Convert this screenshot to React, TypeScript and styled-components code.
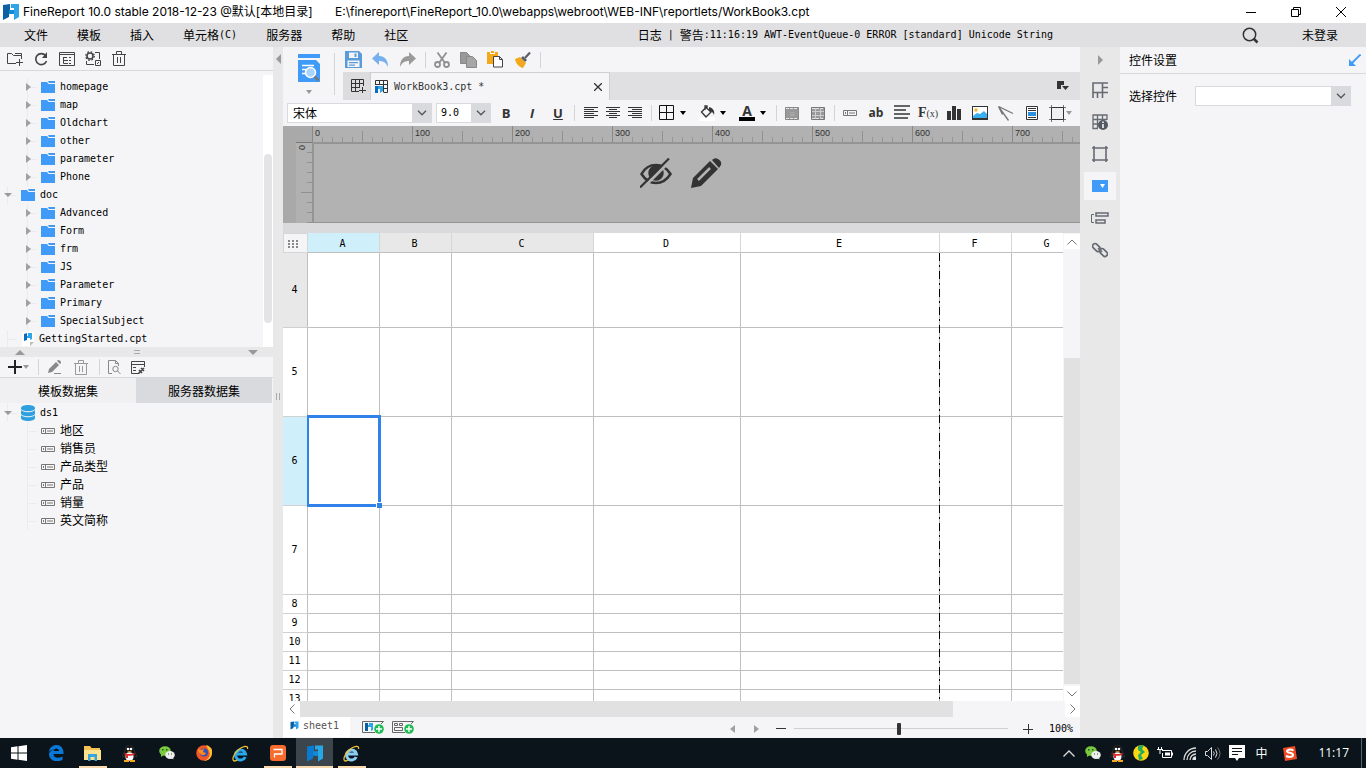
import React from "react";
import styled, { createGlobalStyle, css } from "styled-components";

const MONO = '"DejaVu Sans Mono", "Noto Sans CJK SC", monospace';
const TITLE = 'Inter, "Noto Sans CJK SC", sans-serif';
const CJK = '"Noto Sans CJK SC", sans-serif';

const Global = createGlobalStyle`
  *, *::before, *::after { box-sizing: border-box; }
  body { margin: 0; background: #f5f5f7; color: #000; font-family: ${CJK}; font-size: 12px; line-height: 18px; }
  button, input, select { font: inherit; color: inherit; margin: 0; }
  svg { display: block; flex: none; }
  h2, ul, p { margin: 0; padding: 0; font-weight: 400; font-size: 12px; list-style: none; }
`;

/* ---------- shell ---------- */
const Shell = styled.div`
  display: flex;
  flex-direction: column;
  height: 100vh;
  min-height: 600px;
  overflow: hidden;
`;
const TitleBar = styled.header`
  display: flex;
  align-items: center;
  gap: 3px;
  flex: none;
  height: 23px;
  padding-left: 2px;
  background: #fff;
  font-family: ${TITLE};
  font-size: 12px;
`;
const TitleText = styled.span<{ $min?: number }>`
  min-width: ${(p) => p.$min ?? 0}px;
  white-space: nowrap;
`;
const WindowButtons = styled.div`
  display: flex;
  margin-left: auto;
  padding-right: 2px;
`;
const PlainButton = styled.button<{ $w?: number; $h?: number }>`
  display: flex;
  align-items: center;
  justify-content: center;
  flex: none;
  width: ${(p) => (p.$w ? `${p.$w}px` : "auto")};
  height: ${(p) => (p.$h ? `${p.$h}px` : "auto")};
  padding: 0;
  border: 0;
  background: none;
  white-space: nowrap;
`;
const MenuBar = styled.nav`
  display: flex;
  align-items: center;
  flex: none;
  height: 24px;
  padding: 0 28px 0 24px;
  background: #e0e0e2;
`;
const MenuList = styled.div`
  display: flex;
  gap: 29px;
`;
const LoginButton = styled(PlainButton)`
  margin-left: 43px;
`;
const Mono = styled.span`
  font-family: ${MONO};
  font-size: 10px;
`;
const LogText = styled.p`
  display: flex;
  align-items: center;
  margin: 0 189px 0 auto;
  white-space: pre;
`;
const Workspace = styled.main`
  display: flex;
  flex: 1;
  min-height: 0;
`;

/* ---------- left side ---------- */
const Sidebar = styled.aside`
  display: flex;
  flex-direction: column;
  flex: 0 0 273px;
  background: #f5f5f7;
`;
const SideToolbar = styled.div<{ $h: number; $gap: number }>`
  display: flex;
  align-items: center;
  gap: ${(p) => p.$gap}px;
  flex: none;
  height: ${(p) => p.$h}px;
  padding: 0 7px;
  border-bottom: 1px solid #d8d8da;
`;
const TreePane = styled.div`
  display: flex;
  flex: 0 0 276px;
  padding-top: 4px;
  overflow: hidden;
`;
const TreeList = styled.ul<{ $top: number }>`
  flex: 1;
  padding-top: ${(p) => p.$top}px;
`;
const TreeRow = styled.li<{ $level: number; $cjk?: boolean }>`
  display: flex;
  align-items: center;
  height: 18px;
  padding-left: ${(p) => 3 + p.$level * 20}px;
  font-family: ${MONO};
  font-size: ${(p) => (p.$cjk ? 12 : 10)}px;
  background: linear-gradient(#ebebed, #ebebed) no-repeat ${(p) => 7 + p.$level * 20}px 9px / 10px 1px,
    linear-gradient(#ebebed, #ebebed) no-repeat ${(p) => 7 + p.$level * 20}px 0 / 1px 100%;
`;
const Twisty = styled.span`
  display: flex;
  justify-content: center;
  width: 10px;
  margin-right: 8px;
`;
const TreeLabel = styled.span`
  margin-left: 5px;
`;
const TreeScroll = styled.div`
  flex: 0 0 10px;
  padding: 79px 1px 0;
  background: #fff;
`;
const TreeThumb = styled.div`
  height: 169px;
  border-radius: 4px;
  background: #e4e4e6;
`;
const HSplit = styled.div`
  display: flex;
  align-items: center;
  justify-content: space-between;
  flex: none;
  height: 10px;
  padding: 0 15px;
  background: #e8e8e8;
`;
const Divider = styled.span<{ $h?: number; $before?: number; $after?: number }>`
  flex: none;
  width: 1px;
  height: ${(p) => p.$h ?? 16}px;
  margin: 0 ${(p) => p.$after ?? 0}px 0 ${(p) => p.$before ?? 0}px;
  background: #d4d4d6;
`;
const TabRow = styled.div`
  display: flex;
  flex: none;
  height: 25px;
  padding-right: 1px;
`;
const SideTab = styled.button<{ $active?: boolean }>`
  flex: 1;
  padding: 0;
  border: 0;
  background: ${(p) => (p.$active ? "#f0f0f2" : "#d8dadd")};
`;
const VSplit = styled.div`
  display: flex;
  flex-direction: column;
  align-items: center;
  flex: 0 0 10px;
  padding: 7px 0 10px;
  background: #e8e8e8;
`;
const Grip = styled.span`
  width: 4px;
  height: 7px;
  margin: auto 1px auto 0;
  border: solid #aaa;
  border-width: 0 1px;
`;

/* ---------- editor ---------- */
const Editor = styled.section`
  display: flex;
  flex-direction: column;
  flex: 1;
  min-width: 0;
  background: #f5f5f7;
`;
const EditorHead = styled.div`
  display: flex;
  align-items: center;
  flex: none;
  height: 53px;
`;
const PreviewButton = styled.button`
  display: flex;
  flex-direction: column;
  align-items: center;
  gap: 7px;
  width: 51px;
  padding: 0;
  border: 0;
  background: none;
`;
const HeadColumn = styled.div`
  display: flex;
  flex-direction: column;
  flex: 1;
  min-width: 0;
`;
const HeadToolbar = styled.div`
  display: flex;
  align-items: center;
  height: 25px;
  padding-left: 2px;
`;
const ToolGroup = styled.div`
  display: flex;
  gap: 10px;
`;
const FileTabs = styled.div`
  display: flex;
  height: 28px;
  background: #e0e0e2;
`;
const NewTab = styled(PlainButton)`
  padding-left: 4px;
  background: #dcdcdf;
`;
const FileTab = styled.div`
  display: flex;
  align-items: center;
  width: 240px;
  padding: 0 1px 0 4px;
  border: 1px solid #cfcfd1;
  border-bottom: 0;
  background: #f5f5f7;
  color: #333;
`;
const FileName = styled(Mono)`
  margin: 0 auto 0 5px;
`;
const TabMenu = styled(PlainButton)`
  margin: 0 11px 0 auto;
`;
const FormatBar = styled.div`
  display: flex;
  align-items: center;
  flex: none;
  height: 26px;
  padding-left: 4px;
`;
const Picker = styled.span<{ $w?: number; $gap?: number }>`
  display: grid;
  align-items: center;
  flex: ${(p) => (p.$w ? `0 0 ${p.$w}px` : "1")};
  height: 20px;
  margin-right: ${(p) => p.$gap ?? 0}px;
  & > * { grid-area: 1 / 1; }
`;
const PickerSelect = styled.select<{ $mono?: boolean }>`
  width: 100%;
  height: 20px;
  padding: 0 22px 0 5px;
  border: 1px solid #d8dadd;
  border-radius: 0;
  background: #fff;
  appearance: none;
  ${(p) => p.$mono && css`padding-left: 4px; font-family: ${MONO}; font-size: 10px;`}
`;
const PickerArrow = styled.span`
  display: flex;
  align-items: center;
  justify-content: center;
  justify-self: end;
  width: 20px;
  height: 20px;
  background: #d8dadd;
  pointer-events: none;
`;
const LetterButton = styled(PlainButton)<{ $kind: "b" | "i" | "u" }>`
  color: #333;
  font-family: "Open Sans", sans-serif;
  font-size: 13px;
  font-weight: 700;
  font-style: ${(p) => (p.$kind === "i" ? "italic" : "normal")};
  text-decoration: ${(p) => (p.$kind === "u" ? "underline" : "none")};
`;
const MenuToolButton = styled(PlainButton)<{ $tight?: boolean }>`
  justify-content: flex-start;
  gap: ${(p) => (p.$tight ? 0 : 5)}px;
  padding-left: 4px;
`;
const ColorLetter = styled.span`
  width: 16px;
  height: 16px;
  border-bottom: 4px solid #000;
  color: #333;
  font: 700 14px/12px "Open Sans", sans-serif;
  text-align: center;
`;
const AbText = styled.span`
  color: #333;
  font: 700 12px/16px "Open Sans", sans-serif;
`;
const FxText = styled.span`
  color: #333;
  font: 700 14px/16px "Liberation Serif", serif;
  small { font-size: 10px; font-weight: 400; }
`;

/* ---------- rulers ---------- */
const RulerArea = styled.div`
  display: flex;
  flex-direction: column;
  flex: none;
  height: 97px;
  overflow: hidden;
  background: #a9a9a9;
`;
const HRuler = styled.div`
  display: flex;
  flex: none;
  height: 16px;
  margin-left: 29px;
  overflow: hidden;
  background: linear-gradient(to right, #888 0 1px, transparent 1px) 0 0 / 100px 16px,
    linear-gradient(to right, #919191 0 1px, transparent 1px) repeat-x 50px 5px / 100px 11px,
    linear-gradient(to right, #969696 0 1px, transparent 1px) repeat-x 0 11px / 10px 5px,
    #b1b1b1;
`;
const RulerMark = styled.span`
  flex: 0 0 100px;
  padding-left: 3px;
  color: #333;
  font: 9px/14px "Liberation Sans", sans-serif;
`;
const CanvasRow = styled.div`
  display: flex;
  flex: 1;
  padding-left: 13px;
`;
const VRuler = styled.span`
  width: 16px;
  padding-top: 2px;
  border-top: 1px solid #777;
  color: #333;
  font: 9px/10px "Liberation Sans", sans-serif;
  writing-mode: vertical-rl;
  background: linear-gradient(#919191, #919191) no-repeat 5px 49px / 11px 1px,
    repeating-linear-gradient(to bottom, transparent 0 9px, #919191 9px 10px) no-repeat right 0 / 5px 100%,
    #b1b1b1;
  & > span { display: block; margin-right: 5px; }
`;
const ParamCanvas = styled.div`
  display: flex;
  align-items: center;
  justify-content: center;
  gap: 19px;
  flex: 1;
  padding: 0 32px 20px 0;
  border: solid #949494;
  border-width: 2px 0 1px 2px;
  background: #b2b2b2;
`;
const Gap = styled.div`
  flex: none;
  height: 10px;
  background: #dadadc;
`;

/* ---------- sheet ---------- */
const SheetRow = styled.div`
  display: flex;
  flex: 1;
  min-height: 0;
`;
const SheetView = styled.div`
  position: relative;
  flex: 1;
  min-width: 0;
  overflow: hidden;
  background: #fff;
`;
const Sheet = styled.table`
  width: 801px;
  table-layout: fixed;
  border-collapse: separate;
  border-spacing: 0;
  font-family: ${MONO};
  font-size: 10px;
  line-height: 12px;
`;
type Tone = "on" | "dim" | undefined;
const toneColor = (t: Tone) => (t === "on" ? "#cfeffb" : t === "dim" ? "#e8e8e8" : "#fff");
const ColHead = styled.th<{ $tone?: Tone }>`
  height: 20px;
  padding: 3px 2px 0 0;
  border-right: 1px solid #d6d6d8;
  border-bottom: 1px solid #bfbfbf;
  background: ${(p) => toneColor(p.$tone)};
  font-weight: 400;
`;
const Corner = styled.th`
  padding: 2px 0 0 4px;
  border: 1px solid #d6d6d8;
  background: #f5f5f7;
`;
const RowHead = styled.th<{ $tone?: Tone; $h: number }>`
  height: ${(p) => p.$h}px;
  padding: 0 1px 0 0;
  border-right: 1px solid #bfbfbf;
  border-bottom: 1px solid #d0d0d0;
  background: ${(p) => toneColor(p.$tone)};
  font-weight: 400;
`;
const Cell = styled.td`
  position: relative;
  padding: 0;
  border-right: 1px solid #bfbfbf;
  border-bottom: 1px solid #bfbfbf;
`;
const Selection = styled.div`
  position: absolute;
  z-index: 1;
  inset: -2px -2px -2px -1px;
  border: 3px solid #3081ea;
  border-left-width: 2px;
  &::after {
    content: "";
    position: absolute;
    right: -4px;
    bottom: -4px;
    width: 6px;
    height: 6px;
    border: solid #fff;
    border-width: 1px 0 0 1px;
    background: #3081ea;
  }
`;
const PageBreak = styled.div`
  position: absolute;
  top: 20px;
  bottom: 0;
  left: 656px;
  width: 1px;
  background: repeating-linear-gradient(to bottom, #000 0 8px, #bbb 8px 12px, #000 12px 14px, #bbb 14px 18px);
`;
const VScroll = styled.div`
  display: flex;
  flex-direction: column;
  flex: 0 0 17px;
  padding: 1px 0 0 1px;
`;
const HScroll = styled.div`
  display: flex;
  flex: none;
  height: 16px;
`;
const ScrollButton = styled(PlainButton)`
  background: #fff;
`;
const Stretch = styled.div<{ $grow: number; $thumb?: boolean }>`
  flex: ${(p) => p.$grow};
  background: ${(p) => (p.$thumb ? "#e1e1e1" : "transparent")};
`;
const SheetBar = styled.footer`
  display: flex;
  align-items: center;
  flex: none;
  height: 21px;
`;
const SheetTab = styled.button`
  display: flex;
  align-items: center;
  gap: 4px;
  align-self: flex-start;
  width: 67px;
  height: 20px;
  padding: 0 0 3px 7px;
  border: 0;
  background: #fff;
  color: #555;
`;
const AddButtons = styled.div`
  display: flex;
  gap: 8px;
  margin-left: 12px;
`;
const ZoomControls = styled.div`
  display: flex;
  align-items: center;
  margin-left: auto;
  padding: 2px 7px 0 0;
`;
const ZoomRange = styled.input`
  appearance: none;
  width: 214px;
  height: 14px;
  margin: 0 14px 0 1px;
  background: none;
  &::-webkit-slider-runnable-track { height: 1px; background: #d0d0d2; }
  &::-webkit-slider-thumb {
    appearance: none;
    width: 4px;
    height: 12px;
    margin-top: -5px;
    border-radius: 1px;
    background: #333;
  }
`;
const ZoomValue = styled(Mono)`
  margin-left: 15px;
`;

/* ---------- right side ---------- */
const Strip = styled.nav`
  display: flex;
  flex-direction: column;
  align-items: center;
  gap: 4px;
  flex: 0 0 40px;
  background: #e8e8e8;
`;
const StripButton = styled(PlainButton)<{ $active?: boolean }>`
  width: 32px;
  height: 28px;
  background: ${(p) => (p.$active ? "#f5f5f7" : "none")};
`;
const Properties = styled.aside`
  flex: 0 0 246px;
  background: #f5f5f7;
`;
const PropHead = styled.div`
  display: flex;
  align-items: center;
  justify-content: space-between;
  height: 27px;
  padding: 0 5px 0 9px;
  border-bottom: 1px solid #d8d8da;
`;
const PropField = styled.label`
  display: flex;
  align-items: center;
  gap: 18px;
  padding: 12px 15px 0 9px;
`;

/* ---------- task bar ---------- */
const Taskbar = styled.footer`
  display: flex;
  flex: none;
  height: 30px;
  background: #0a141a;
  color: #fff;
`;
const TaskButton = styled.button<{ $open?: boolean; $active?: boolean }>`
  display: flex;
  align-items: center;
  justify-content: center;
  flex: 0 0 37px;
  padding: 0;
  border: 0;
  background: ${(p) => (p.$active ? "#3c454b" : "none")};
  ${(p) =>
    p.$open &&
    css`
      background: linear-gradient(#fbd9ae, #fbd9ae) no-repeat center bottom / 28px 2px;
    `}
  ${(p) => p.$active && css`border-bottom: 2px solid #fbd9ae; padding-top: 2px;`}
`;
const Tray = styled.div`
  display: flex;
  align-items: center;
  margin-left: auto;
`;
const Clock = styled.time`
  margin: 0 12px 0 13px;
  font-family: "Open Sans", sans-serif;
  font-size: 12px;
`;
const DesktopEdge = styled.span`
  width: 1px;
  height: 30px;
  margin-right: 4px;
  background: #59636a;
`;

/* ---------- icons ---------- */
type IconProps = { w: number; h: number; children: React.ReactNode; c?: string; sw?: number };
const Icon = ({ w, h, children, c = "#333", sw = 1 }: IconProps) => (
  <svg width={w} height={h} viewBox={`0 0 ${w} ${h}`} fill="none" stroke={c} strokeWidth={sw} aria-hidden="true">
    {children}
  </svg>
);
const Caret = ({ c = "#999", w = 8 }: { c?: string; w?: number }) => (
  <Icon w={w} h={4} c="none"><path fill={c} d={`M0 0h${w}L${w / 2} 4z`} /></Icon>
);
const Chevron = () => <Icon w={10} h={6} c="#555" sw={1.3}><path d="M1 .8l4 4 4-4" /></Icon>;
const ClosedArrow = () => <Icon w={5} h={8} c="none"><path fill="#a0a0a0" d="M0 0l5 4-5 4z" /></Icon>;
const Logo = ({ w = 18, h = 16, light = "#2da5e8", dark = "#0a5fa5" }) => (
  <svg width={w} height={h} viewBox="0 0 18 16" aria-hidden="true">
    <path fill={dark} d="M1 1L8 0v6h2v4H7v3l-6 3z" />
    <path fill={light} d="M9 0h8v13l-5 3v-6H9V6h3V4H9z" />
    <path fill="#158ad4" d="M7 6h5v4H7z" />
  </svg>
);
const Folder = () => (
  <Icon w={14} h={12} c="none">
    <path fill="#409bf8" d="M0 1h6l1.500 2H14v9H0z" />
    <path fill="#409bf8" d="M7 0h7v2H8z" />
  </Icon>
);
const ReportFile = () => (
  <Icon w={13} h={14} c="none">
    <path fill="#fff" d="M1 0h12v10l-4 4H1z" />
    <path fill="#bbb" d="M9 10h4l-4 4z" />
    <path fill="#0a6cc0" d="M3 2l3-1v3h1v2H6v2l-3 1z" />
    <path fill="#2da5e8" d="M7 1h4v6l-2 1V6H6V4h1z" />
  </Icon>
);
const Database = () => (
  <Icon w={14} h={16} c="none">
    <path fill="#2f9fe0" d="M0 3c0-4 14-4 14 0v10c0 4-14 4-14 0z" />
    <path stroke="#f5f5f7" d="M0 4.500c2 3 12 3 14 0M0 9.500c2 3 12 3 14 0" />
  </Icon>
);
const Field = () => (
  <Icon w={14} h={6} c="#777"><path d="M.5.5h13v5H.5zM2.500 2v2M4.500 1v4M6 3h6" /></Icon>
);
const Trash = ({ c = "#333" }) => (
  <Icon w={14} h={15} c={c}><path d="M0 3.500h14M4.500 3V.5h5V3M1.500 4v10.500h11V4M5.500 6v6M8.500 6v6" /></Icon>
);
const Lines = ({ rows, w = 14, sw = 1 }: { rows: [number, number][]; w?: number; sw?: number }) => (
  <Icon w={w} h={rows.length * (sw > 1 ? 4 : 2)} c="#333" sw={sw}>
    {rows.map(([a, b], i) => (
      <path key={i} d={`M${a} ${sw > 1 ? i * 4 + 1 : i * 2 + 0.5}H${b}`} />
    ))}
  </Icon>
);
const Penguin = () => (
  <Icon w={15} h={17} c="none">
    <path fill="#111" stroke="#555" strokeWidth=".4" d="M3 6c0-8 9-8 9 0 1 2 3 4 2.500 6l-2-1.500c0 6-10 6-10 0L.6 12C0 10 2 8 3 6z" />
    <ellipse cx="7.500" cy="11.500" rx="4" ry="4.200" fill="#fff" />
    <circle cx="6" cy="4" r="1.300" fill="#fff" /><circle cx="9" cy="4" r="1.300" fill="#fff" />
    <path fill="#f6a81c" d="M5 6.200h5L7.500 7.600zM2 15h5v2H2zM8 15h5v2H8z" />
    <path fill="#e22b2b" d="M2.500 7.500c3 2 7 2 10 0v2c-2 1.500-5 1.500-6.500 1.200V13H4v-3c-1 0-1.500-.5-1.500-1z" />
  </Icon>
);
const WeChat = () => (
  <Icon w={16} h={14} c="none">
    <ellipse cx="6" cy="5" rx="5.800" ry="4.800" fill="#7bc93f" />
    <path fill="#7bc93f" d="M2 8v3l3-2z" />
    <ellipse cx="11" cy="9" rx="4.800" ry="4" fill="#eee" />
    <path fill="#eee" d="M12 12l2.500 1.500L14 11z" />
    <path fill="#24551a" d="M3 3h1.500v1.500H3zM7 3h1.500v1.500H7zM9 7.500h1v1H9zM12 7.500h1v1h-1z" />
  </Icon>
);
const Explorer = ({ ring = "#f1c232", c = "#2aa6ea" }) => (
  <Icon w={17} h={17} c="none">
    <path stroke={c} strokeWidth="3" d="M13.200 12A5 5 0 1 1 13.500 9H4" />
    <path stroke={ring} strokeWidth="1.300" d="M15.500 4C16.500 0 11 .5 6 5 1 9.500-.5 16 2.500 16c1 0 2-.5 3-1.200" />
  </Icon>
);
const AddSheet = ({ children }: { children: React.ReactNode }) => (
  <Icon w={22} h={13} c="#666">
    <path d="M13 11.500H.5V.5h21L19 3" />
    {children}
    <circle cx="17" cy="8" r="4.800" fill="#1fbb55" stroke="none" />
    <path stroke="#fff" strokeWidth="1.400" d="M14 8h6M17 5v6" />
  </Icon>
);

/* ---------- data ---------- */
const MENU = ["文件", "模板", "插入", "单元格", "服务器", "帮助", "社区"];
const TREE: { name: string; level: number; kind: "closed" | "open" | "file" }[] = [
  ...["homepage", "map", "Oldchart", "other", "parameter", "Phone"].map((name) => ({ name, level: 1, kind: "closed" as const })),
  { name: "doc", level: 0, kind: "open" },
  ...["Advanced", "Form", "frm", "JS", "Parameter", "Primary", "SpecialSubject"].map((name) => ({ name, level: 1, kind: "closed" as const })),
  { name: "GettingStarted.cpt", level: 0, kind: "file" },
];
const FIELDS = ["地区", "销售员", "产品类型", "产品", "销量", "英文简称"];
const COLS: { name: string; w: number; tone?: Tone }[] = [
  { name: "A", w: 72, tone: "on" },
  { name: "B", w: 72, tone: "dim" },
  { name: "C", w: 142, tone: "dim" },
  { name: "D", w: 147 },
  { name: "E", w: 199 },
  { name: "F", w: 72 },
  { name: "G", w: 72 },
];
const ROWS: { n: number; h: number; tone?: Tone }[] = [
  { n: 4, h: 75, tone: "dim" },
  { n: 5, h: 89 },
  { n: 6, h: 89, tone: "on" },
  { n: 7, h: 89 },
  ...[8, 9, 10, 11, 12, 13].map((n) => ({ n, h: 19 })),
];
const RULER_MARKS = [0, 100, 200, 300, 400, 500, 600, 700];

export default function App() {
  return (
    <Shell>
      <Global />
      <TitleBar>
        <Logo />
        <TitleText $min={309}>FineReport 10.0 stable 2018-12-23 @默认[本地目录]</TitleText>
        <TitleText>{"E:\\finereport\\FineReport_10.0\\webapps\\webroot\\WEB-INF\\reportlets/WorkBook3.cpt"}</TitleText>
        <WindowButtons>
          <PlainButton $w={45} $h={22} aria-label="Minimize"><Icon w={10} h={10} c="#000"><path d="M0 5.500h10" /></Icon></PlainButton>
          <PlainButton $w={45} $h={22} aria-label="Restore"><Icon w={10} h={10} c="#000"><path d="M.5 2.500h7v7h-7zM2.500 2V.5h7v7H8" /></Icon></PlainButton>
          <PlainButton $w={46} $h={22} aria-label="Close"><Icon w={10} h={10} c="#000"><path d="M0 0l10 10M10 0L0 10" /></Icon></PlainButton>
        </WindowButtons>
      </TitleBar>

      <MenuBar>
        <MenuList>
          {MENU.map((m) => (
            <PlainButton key={m}>{m}{m === "单元格" && <Mono>(C)</Mono>}</PlainButton>
          ))}
        </MenuList>
        <LogText>日志<Mono> | </Mono>警告<Mono>:11:16:19 AWT-EventQueue-0 ERROR [standard] Unicode String</Mono></LogText>
        <PlainButton aria-label="Search">
          <Icon w={17} h={17} c="#333" sw={1.5}><circle cx="7.500" cy="7.500" r="6.200" /><path strokeWidth="2.500" d="M11.500 11.500l4 4" /></Icon>
        </PlainButton>
        <LoginButton>未登录</LoginButton>
      </MenuBar>

      <Workspace>
        <Sidebar>
          <SideToolbar $h={24} $gap={10}>
            <PlainButton $w={16} aria-label="New folder"><Icon w={16} h={14} c="#444"><path d="M9 11.500H.5v-10h4l2 2h8V7M8 1.500h6.500v2M12.500 7v7M9 10.500h7" /></Icon></PlainButton>
            <PlainButton $w={16} aria-label="Refresh"><Icon w={14} h={14} c="#444" sw={1.6}><path d="M11.500 3.500A5.500 5.500 0 1 0 12.500 9" /><path stroke="none" fill="#444" d="M13 0v6H8z" /></Icon></PlainButton>
            <PlainButton $w={16} aria-label="Show in explorer"><Icon w={16} h={14} c="#444"><path d="M.5.5h15v13H.5zM0 2.500h16M4.500 5v6.500H9M4.500 5.500H8M4.500 8.500H9M10 5.500h2M10 8.500h2M10 11.500h2" /></Icon></PlainButton>
            <PlainButton $w={16} aria-label="Settings"><Icon w={16} h={15} c="#444"><circle cx="5" cy="5" r="3" strokeWidth="1.600" /><circle cx="5" cy="5" r="4.300" strokeWidth="1.200" strokeDasharray="1.700 1.700" /><path d="M10 1.500h4.500V8M1.500 10v3.500H9M10.500 9.500h5v5h-5zM12 13l2-2" /></Icon></PlainButton>
            <PlainButton $w={16} aria-label="Delete"><Trash c="#444" /></PlainButton>
          </SideToolbar>
          <TreePane>
            <TreeList $top={3}>
              {TREE.map((t) => (
                <TreeRow key={t.name} $level={t.level}>
                  <Twisty>{t.kind === "closed" ? <ClosedArrow /> : t.kind === "open" ? <Caret /> : null}</Twisty>
                  {t.kind === "file" ? <ReportFile /> : <Folder />}
                  <TreeLabel>{t.name}</TreeLabel>
                </TreeRow>
              ))}
            </TreeList>
            <TreeScroll><TreeThumb /></TreeScroll>
          </TreePane>
          <HSplit>
            <Icon w={10} h={5} c="none"><path fill="#999" d="M0 5l5-5 5 5z" /></Icon>
            <Icon w={6} h={4} c="#aaa"><path d="M0 .5h6M0 3.500h6" /></Icon>
            <Icon w={10} h={5} c="none"><path fill="#999" d="M0 0h10L5 5z" /></Icon>
          </HSplit>
          <SideToolbar $h={21} $gap={8}>
            <PlainButton $w={23} aria-label="Add dataset"><Icon w={15} h={14} c="#222" sw={2}><path d="M0 7h14M7 0v14" /></Icon><Caret w={6} /></PlainButton>
            <Divider />
            <PlainButton $w={16} aria-label="Edit"><Icon w={14} h={14} c="none"><path fill="#888" d="M0 13l1-4 7-7 3 3-7 7zM9 1l1-1q3 0 3 3l-1 1z" /><path stroke="#888" d="M6 13.500h7" /></Icon></PlainButton>
            <PlainButton $w={20} aria-label="Remove"><Trash c="#999" /></PlainButton>
            <Divider />
            <PlainButton $w={12} aria-label="Preview data"><Icon w={13} h={14} c="#888"><path d="M4 13.500H.5V.5h7l3 3V6M7.500.5v3h3" /><circle cx="7.500" cy="9" r="2.700" /><path d="M9.500 11l3 3" /></Icon></PlainButton>
            <PlainButton $w={20} aria-label="Connections"><Icon w={15} h={13} c="#444"><path d="M7 12.500H.5V.5h13V6M0 3.500h14M2 6.500h3M2 9.500h3" /><path strokeWidth="1.600" d="M9 11l4-4M8 9l3 3M10 7l3 3M7 13l2-2" /></Icon></PlainButton>
          </SideToolbar>
          <TabRow role="tablist">
            <SideTab role="tab" aria-selected $active>模板数据集</SideTab>
            <SideTab role="tab">服务器数据集</SideTab>
          </TabRow>
          <TreeList $top={1}>
            <TreeRow $level={0}><Twisty><Caret /></Twisty><Database /><TreeLabel>ds1</TreeLabel></TreeRow>
            {FIELDS.map((f) => (
              <TreeRow key={f} $level={1} $cjk><Twisty /><Field /><TreeLabel>{f}</TreeLabel></TreeRow>
            ))}
          </TreeList>
        </Sidebar>
        <VSplit>
          <Icon w={5} h={10} c="none"><path fill="#999" d="M5 0v10L0 5z" /></Icon>
          <Grip />
        </VSplit>

        <Editor>
          <EditorHead>
            <PreviewButton aria-label="Preview">
              <Icon w={22} h={30} c="none">
                <path fill="#409bf8" d="M0 1h22v4H0zM0 7h18l4 4v18H0z" />
                <path stroke="#fff" strokeWidth="1.600" d="M4 12.500h12M4 16.500h4M4 20.500h4" />
                <circle cx="12.500" cy="19.500" r="5" fill="#a8d4fc" stroke="#fff" strokeWidth="1.500" />
                <path stroke="#777" strokeWidth="2.500" d="M16.500 23.500l4 4" />
              </Icon>
              <Caret w={6} />
            </PreviewButton>
            <Divider $h={42} $after={8} />
            <HeadColumn>
              <HeadToolbar>
                <ToolGroup>
                  <PlainButton $w={17} aria-label="Save"><Icon w={17} h={17} c="none"><path fill="#5b9bd9" d="M0 0h14l3 3v14H0z" /><path fill="#f5f5f7" d="M4 1.500h9V7H4zM2.500 9.500h12V16h-12z" /><path fill="#5b9bd9" d="M9.500 2.500h2V6h-2zM4 11h9v1.200H4zM4 13.500h6v1.200H4z" /></Icon></PlainButton>
                  <PlainButton $w={17} aria-label="Undo"><Icon w={17} h={15} c="none"><path fill="#78b0ee" d="M7 0v4c6 0 9 4 9 11-2-4-4-6-9-6v4L0 6.500z" /></Icon></PlainButton>
                  <PlainButton $w={17} aria-label="Redo"><Icon w={17} h={15} c="none"><path fill="#9a9a9a" d="M10 0v4C4 4 1 8 1 15c2-4 4-6 9-6v4l7-6.500z" /></Icon></PlainButton>
                </ToolGroup>
                <Divider $before={9} $after={7} />
                <ToolGroup>
                  <PlainButton $w={17} aria-label="Cut"><Icon w={16} h={16} c="#909090" sw={1.800}><circle cx="3.500" cy="12.500" r="2.500" /><circle cx="12.500" cy="12.500" r="2.500" /><path d="M5 11L12.500.5M11 11L3.500.5" /></Icon></PlainButton>
                  <PlainButton $w={17} aria-label="Copy"><Icon w={17} h={16} c="#888"><path fill="#999" d="M.5.5h6l3 3v8h-9z" /><path fill="#a6a6a6" d="M6.500 4.500h6l4 4v7h-10z" /></Icon></PlainButton>
                  <PlainButton $w={17} aria-label="Paste"><Icon w={17} h={17} c="none"><path fill="#f4a81c" d="M0 1h11v12H0z" /><path fill="#f5f5f7" d="M3 0h5v3H3z" /><path fill="#f4a81c" d="M4 0h3v2H4z" /><path fill="#fff" stroke="#444" d="M6.500 5.500h6l3 3v7.500h-9zM12.500 5.500v3h3" /></Icon></PlainButton>
                  <PlainButton $w={17} aria-label="Format painter"><Icon w={16} h={16} c="none"><path fill="#f4a81c" d="M0 7l5-2 6 6-3 5C4 15 1 12 0 7z" /><path fill="#5b6068" d="M6 6l2-2 4 4-2 2z" /><path stroke="#5b6068" strokeWidth="2.200" d="M10 6l5-5.500" /></Icon></PlainButton>
                </ToolGroup>
                <Divider $before={9} />
              </HeadToolbar>
              <FileTabs>
                <NewTab $w={27} aria-label="New sheet file"><Icon w={15} h={14} c="#333"><path d="M8 12.500H.5v-12h12V7M0 4.500h13M0 8.500h9M4.500 0v13M8.500 0v9M11.500 8v6M8 11.500h7" /></Icon></NewTab>
                <FileTab>
                  <Icon w={14} h={13} c="#333"><path d="M.5 4V.5h12v12H9M0 4.500h13M8 8.500h5M4.500 0v4M8.500 0v12.500" /><path stroke="none" fill="#0a6cc0" d="M0 6h3v7H0z" /><path stroke="none" fill="#2da5e8" d="M3 6h5v5l-3 2V9H3z" /></Icon>
                  <FileName>WorkBook3.cpt *</FileName>
                  <PlainButton $w={20} aria-label="Close file"><Icon w={8} h={8} c="#333" sw={1.300}><path d="M0 0l8 8M8 0L0 8" /></Icon></PlainButton>
                </FileTab>
                <TabMenu aria-label="File list"><Icon w={12} h={10} c="none"><path fill="#333" d="M0 0h7v4H4v4H0zM5 5h7l-3.500 4z" /></Icon></TabMenu>
              </FileTabs>
            </HeadColumn>
          </EditorHead>

          <FormatBar>
            <Picker $w={145} $gap={4}>
              <PickerSelect aria-label="Font" defaultValue="宋体"><option>宋体</option></PickerSelect>
              <PickerArrow><Chevron /></PickerArrow>
            </Picker>
            <Picker $w={55} $gap={2}>
              <PickerSelect aria-label="Font size" $mono defaultValue="9.0"><option>9.0</option></PickerSelect>
              <PickerArrow><Chevron /></PickerArrow>
            </Picker>
            <LetterButton $w={26} $kind="b" aria-label="Bold">B</LetterButton>
            <LetterButton $w={26} $kind="i" aria-label="Italic">I</LetterButton>
            <LetterButton $w={26} $kind="u" aria-label="Underline">U</LetterButton>
            <Divider $before={3} $after={5} />
            <PlainButton $w={22} aria-label="Align left"><Lines rows={[[0, 14], [0, 10], [0, 14], [0, 10], [0, 14], [0, 10]]} /></PlainButton>
            <PlainButton $w={22} aria-label="Align center"><Lines rows={[[0, 14], [3, 11], [0, 14], [3, 11], [0, 14], [3, 11]]} /></PlainButton>
            <PlainButton $w={22} aria-label="Align right"><Lines rows={[[0, 14], [4, 14], [0, 14], [4, 14], [0, 14], [4, 14]]} /></PlainButton>
            <Divider $before={5} $after={3} />
            <MenuToolButton $w={40} aria-label="Borders"><Icon w={16} h={16} c="#111"><path d="M.5.5h14v14H.5zM.5 7.500h14M7.500.5v14" /></Icon><Caret c="#000" w={6} /></MenuToolButton>
            <MenuToolButton $w={40} aria-label="Fill colour"><Icon w={16} h={16} c="#333"><path stroke="none" fill="#fff" d="M0 12h16v4H0z" /><path strokeWidth="1.300" d="M2.500 7L7 2.500l5 4.500-5 5zM6 5V.8h2V4" /><path stroke="none" fill="#333" d="M10 2c4 1 6 4 5 8-1-3-3-4-5-4z" /></Icon><Caret c="#000" w={6} /></MenuToolButton>
            <MenuToolButton $w={40} aria-label="Text colour"><ColorLetter>A</ColorLetter><Caret c="#000" w={6} /></MenuToolButton>
            <Divider $before={1} $after={2} />
            <PlainButton $w={26} aria-label="Merge cells"><Icon w={14} h={13} c="#888"><path fill="#999" d="M.5.5h13v12H.5z" /><path stroke="#e5e5e5" strokeDasharray="3 1" d="M1 1.500h12M1 11.500h12" /><path stroke="#aaa" d="M5 5.500h4v3H5.500v-1H9" /></Icon></PlainButton>
            <PlainButton $w={26} aria-label="Split cells"><Icon w={14} h={13} c="#777"><path fill="#999" d="M.5.5h13v12H.5z" /><path stroke="#e5e5e5" strokeDasharray="3 1" d="M1 1.500h12M1 11.500h12" /><path stroke="#ccc" d="M1 4.500h12M1 8.500h12M4.500 1v11M9.500 1v11" /></Icon></PlainButton>
            <Divider $before={3} $after={2} />
            <PlainButton $w={26} aria-label="Data column"><Field /></PlainButton>
            <PlainButton $w={26} aria-label="Text"><AbText>ab</AbText></PlainButton>
            <PlainButton $w={26} aria-label="Rich text"><Lines w={16} sw={1.5} rows={[[0, 16], [0, 12], [0, 16], [0, 14]]} /></PlainButton>
            <PlainButton $w={26} aria-label="Formula"><FxText>F<small>(x)</small></FxText></PlainButton>
            <PlainButton $w={26} aria-label="Chart"><Icon w={14} h={14} c="none"><path fill="#333" d="M0 5h4v9H0zM5 0h4v14H5zM10 3h4v11h-4z" /></Icon></PlainButton>
            <PlainButton $w={26} aria-label="Image"><Icon w={16} h={14} c="none"><path fill="#333" d="M0 0h16v14H0z" /><path fill="#fff" d="M1 1h14v11H1z" /><circle cx="4" cy="4" r="1.700" fill="#f8b62c" /><path fill="#38b0f0" d="M1 10l4-3 3 1 4-3 3 3v4H1z" /></Icon></PlainButton>
            <PlainButton $w={26} aria-label="Slope line"><Icon w={16} h={15} c="#777" sw={1.300}><path d="M.5.5L15 7.500M.5.5l10 14M.5.500l4 8" /></Icon></PlainButton>
            <PlainButton $w={26} aria-label="Sub report"><Icon w={12} h={14} c="#333"><path fill="#fff" d="M.5.5h11v13H.5zM2 2.500h8M2 4.500h8M2 11.500h8" /><path stroke="none" fill="#2d8fe0" d="M2 6h8v4H2z" /></Icon></PlainButton>
            <MenuToolButton $w={30} $tight aria-label="Floating element"><Icon w={17} h={17} c="#333"><path d="M2.500 0v17M14.500 0v17M0 2.500h17M0 14.500h17" stroke="#777" strokeDasharray="3 11" /><path fill="#f0f0f0" d="M2.500 2.500h12v12h-12z" /></Icon><Caret w={6} /></MenuToolButton>
          </FormatBar>

          <RulerArea>
            <HRuler>
              {RULER_MARKS.map((m) => <RulerMark key={m}>{m}</RulerMark>)}
            </HRuler>
            <CanvasRow>
              <VRuler><span>0</span></VRuler>
              <ParamCanvas>
                <PlainButton aria-label="Hide parameter pane">
                  <Icon w={32} h={30} c="#333" sw={2.500}>
                    <path d="M1.500 16C6 8 11 7 16 7s10 2 14.500 9C26 23 21 25 16 25S6 23 1.500 16z" />
                    <circle cx="16" cy="15" r="6.500" fill="#333" />
                    <path stroke="#b2b2b2" strokeWidth="3" d="M2 31L32 1" /><path strokeWidth="2.200" d="M0 29.500L29 .5" />
                  </Icon>
                </PlainButton>
                <PlainButton aria-label="Edit parameter pane">
                  <Icon w={31} h={30} c="none">
                    <path fill="#333" d="M0 30l2-10L19 3l8 8L10 28z" /><path fill="#333" d="M21 2q3-3 6-1 4 2 3 6l-2 3z" />
                    <path stroke="#b2b2b2" strokeWidth="2.500" d="M7 22L19 10" />
                  </Icon>
                </PlainButton>
              </ParamCanvas>
            </CanvasRow>
          </RulerArea>
          <Gap />

          <SheetRow>
            <SheetView>
              <Sheet>
                <colgroup>
                  <col width={25} />
                  {COLS.map((c) => <col key={c.name} width={c.w} />)}
                </colgroup>
                <thead>
                  <tr>
                    <Corner><Icon w={10} h={8} c="#888" sw={2}><path strokeDasharray="2 2" d="M0 1h10M0 4h10M0 7h10" /></Icon></Corner>
                    {COLS.map((c) => <ColHead key={c.name} $tone={c.tone} scope="col">{c.name}</ColHead>)}
                  </tr>
                </thead>
                <tbody>
                  {ROWS.map((r) => (
                    <tr key={r.n}>
                      <RowHead $h={r.h} $tone={r.tone} scope="row">{r.n}</RowHead>
                      {COLS.map((c) => (
                        <Cell key={c.name}>{r.n === 6 && c.name === "A" && <Selection />}</Cell>
                      ))}
                    </tr>
                  ))}
                </tbody>
              </Sheet>
              <PageBreak />
            </SheetView>
            <VScroll>
              <ScrollButton $h={15} aria-label="Scroll up"><Icon w={10} h={6} c="#777"><path d="M.5 5.500L5 1l4.500 4.500" /></Icon></ScrollButton>
              <Stretch $grow={109} /><Stretch $grow={325} $thumb /><Stretch $grow={2} />
              <ScrollButton $h={15} aria-label="Scroll down"><Icon w={10} h={6} c="#777"><path d="M.5.500L5 5 9.500.500" /></Icon></ScrollButton>
            </VScroll>
          </SheetRow>
          <HScroll>
            <ScrollButton $w={17} aria-label="Scroll left"><Icon w={6} h={10} c="#777"><path d="M5.500.500L1 5l4.500 4.500" /></Icon></ScrollButton>
            <Stretch $grow={653} $thumb /><Stretch $grow={112} />
            <ScrollButton $w={15} aria-label="Scroll right"><Icon w={6} h={10} c="#777"><path d="M.5.500L5 5 .5 9.500" /></Icon></ScrollButton>
          </HScroll>
          <SheetBar>
            <SheetTab><Logo w={9} h={9} /><Mono>sheet1</Mono></SheetTab>
            <AddButtons>
              <PlainButton $w={22} aria-label="Add report sheet"><AddSheet><path stroke="none" fill="#0a5fa5" d="M3 2h3v8H3z" /><path stroke="none" fill="#2da5e8" d="M7 2h4v7l-2 1V6H6V4h1z" /></AddSheet></PlainButton>
              <PlainButton $w={22} aria-label="Add form sheet"><AddSheet><path d="M2.500 2.500h3v2h-3zM7.500 2.500h3v2h-3zM2.500 6.500h8v3h-8z" /></AddSheet></PlainButton>
            </AddButtons>
            <ZoomControls>
              <PlainButton $w={24} aria-label="Previous sheet"><Icon w={5} h={8} c="none"><path fill="#a0a0a0" d="M5 0v8L0 4z" /></Icon></PlainButton>
              <PlainButton $w={24} aria-label="Next sheet"><ClosedArrow /></PlainButton>
              <PlainButton $w={24} aria-label="Zoom out"><Icon w={10} h={2} c="#333"><path d="M0 .5h10" /></Icon></PlainButton>
              <ZoomRange type="range" min={0} max={100} defaultValue={49} aria-label="Zoom" />
              <PlainButton $w={12} aria-label="Zoom in"><Icon w={10} h={10} c="#333"><path d="M0 5.500h10M5.500 0v10" /></Icon></PlainButton>
              <ZoomValue>100%</ZoomValue>
            </ZoomControls>
          </SheetBar>
        </Editor>

        <Strip>
          <PlainButton $h={25} aria-label="Collapse"><Icon w={5} h={10} c="none"><path fill="#999" d="M0 0l5 5-5 5z" /></Icon></PlainButton>
          <StripButton aria-label="Cell element"><Icon w={16} h={16} c="#666a73" sw={1.600}><path d="M1 16V1h15M1 10.500h15M10.500 1v15M10.500 5.500H16M5.500 10.500V16" /></Icon></StripButton>
          <StripButton aria-label="Cell attributes"><Icon w={16} h={16} c="#666a73" sw={1.300}><path d="M6 14.500H1V1h14v5M1 5.500h14M1 10h6M5.500 1v13M10.500 1v5" /><circle cx="11" cy="11" r="5" fill="#555963" stroke="none" /><path stroke="#fff" strokeWidth="1.500" d="M11 7.500V9M11 10v4" /></Icon></StripButton>
          <StripButton aria-label="Floating element settings"><Icon w={16} h={16} c="#666a73" sw={1.600}><path d="M2 0v16M14 0v16M0 2h16M0 14h16" /></Icon></StripButton>
          <StripButton $active aria-label="Widget settings"><Icon w={16} h={12} c="none"><path fill="#409bf8" d="M0 0h16v12H0z" /><path fill="#fff" d="M8 4h5l-2.500 4z" /></Icon></StripButton>
          <StripButton aria-label="Condition attributes"><Icon w={18} h={12} c="#666a73" sw={1.500}><path d="M5 1h12v3H5zM5 8h9v3H5z" /><path strokeWidth="1" d="M3 2.500H.5v8H3" /></Icon></StripButton>
          <StripButton aria-label="Hyperlink"><Icon w={16} h={16} c="#666a73" sw={1.700}><rect x="0" y="3" width="9" height="5" rx="2.500" transform="rotate(45 4.500 5.500)" /><rect x="7" y="8" width="9" height="5" rx="2.500" transform="rotate(45 11.500 10.500)" /><path d="M6 6l4 4" /></Icon></StripButton>
        </Strip>
        <Properties>
          <PropHead>
            <h2>控件设置</h2>
            <PlainButton aria-label="Undock"><Icon w={12} h={12} c="#409bf8" sw={1.800}><path d="M11.500.5L3 9" /><path stroke="none" fill="#409bf8" d="M0 5v7h7z" /></Icon></PlainButton>
          </PropHead>
          <PropField>
            选择控件
            <Picker>
              <PickerSelect><option> </option></PickerSelect>
              <PickerArrow><Chevron /></PickerArrow>
            </Picker>
          </PropField>
        </Properties>
      </Workspace>

      <Taskbar>
        <TaskButton aria-label="Start"><Icon w={16} h={16} c="none"><path fill="#fff" d="M0 2.200L6.500 1.300V7.500H0zM7.500 1.200L16 0v7.500H7.500zM0 8.500h6.500v6.200L0 13.800zM7.500 8.500H16V16l-8.500-1.200z" /></Icon></TaskButton>
        <TaskButton aria-label="Edge"><Icon w={16} h={16} c="none"><path fill="#0a78d6" d="M.5 7C2 2 5 0 8.500 0 13 0 16 4 15.500 9H5.500c0 4 5 5 9 2.500V15C8 18 1 15 1 9.500 1 6.500 4 4.500 6.500 4.200 3.500 4.500 1.500 5.500.5 7zm5-1H11C11 2.500 6 2.500 5.500 6z" /></Icon></TaskButton>
        <TaskButton $open aria-label="File Explorer"><Icon w={17} h={15} c="none"><path fill="#f6c352" d="M0 0h6l1.500 2H16v4H0z" /><path fill="#fde38f" d="M0 4h17v10H0z" /><path fill="#35a4e0" d="M4 8h9v7h-2.500v-4h-4v4H4z" /></Icon></TaskButton>
        <TaskButton aria-label="QQ"><Penguin /></TaskButton>
        <TaskButton aria-label="WeChat"><WeChat /></TaskButton>
        <TaskButton aria-label="Firefox"><Icon w={16} h={16} c="none"><circle cx="8" cy="8" r="7.800" fill="#f0542a" /><path fill="#ffbe2e" d="M10 0c5 1 7 5 6 9-1 5-5 7-8 7 5-2 7-6 5-10z" /><circle cx="8" cy="7.500" r="4" fill="#2b52b8" /><path fill="#ff8a1e" d="M2 4l3 1 3-1-1 3 3 1c-1 3-5 3-6 0C3 9 2 6 2 4z" /></Icon></TaskButton>
        <TaskButton aria-label="Internet Explorer"><Explorer /></TaskButton>
        <TaskButton $open aria-label="WPS Presentation"><Icon w={16} h={16} c="none"><rect width="16" height="16" rx="3" fill="#f76b2e" /><path stroke="#fff" strokeWidth="1.300" d="M3.500 4.500h8.500v4.500H4.500V12.500" /></Icon></TaskButton>
        <TaskButton $active aria-label="FineReport"><Logo w={18} h={17} light="#27a8e6" dark="#0a7ad0" /></TaskButton>
        <TaskButton $open aria-label="Internet Explorer window"><Explorer c="#8ccdf2" /></TaskButton>
        <Tray>
          <PlainButton $w={24} aria-label="Hidden icons"><Icon w={12} h={7} c="#ddd" sw={1.300}><path d="M.5 6.500L6 1l5.500 5.500" /></Icon></PlainButton>
          <PlainButton $w={24} aria-label="WeChat tray"><WeChat /></PlainButton>
          <PlainButton $w={24} aria-label="QQ tray"><Penguin /></PlainButton>
          <PlainButton $w={24} aria-label="QQ Music"><Icon w={16} h={16} c="none"><circle cx="8" cy="8" r="7.800" fill="#fbd615" /><path fill="#1fae5b" d="M5 1l6-1-2 4 3 3-4 3 2 4-4 1-1-5 3-3-3-2z" /></Icon></PlainButton>
          <PlainButton $w={24} aria-label="Power"><Icon w={16} h={12} c="#fff"><path d="M5 3.500h9.500v7h-9V6M15.500 5.500v3M1.500 0v3M4.500 0v3M0 2.500h6M3 3v4" /><path strokeWidth="3" d="M8 7h5" /></Icon></PlainButton>
          <PlainButton $w={24} aria-label="Network"><Icon w={13} h={13} c="#ddd" sw={1.300}><path d="M1 13A12 12 0 0 1 13 1M4 13a9 9 0 0 1 9-9M7 13a6 6 0 0 1 6-6" /><path d="M10 13a3 3 0 0 1 3-3v3z" fill="#fff" /></Icon></PlainButton>
          <PlainButton $w={24} aria-label="Volume"><Icon w={16} h={13} c="#ddd"><path d="M.5 4.500h2l4-4v12l-4-4h-2zM8.500 4.500q1.500 2 0 4M10.500 2.500q3 4 0 8" /><path stroke="#777" d="M12.500.500q5 6 0 12" /></Icon></PlainButton>
          <PlainButton $w={24} aria-label="Notifications"><Icon w={16} h={16} c="none"><path fill="#fff" d="M0 0h16v13H10l-2 3-2-3H0z" /><path stroke="#0a141a" d="M3 3.500h10M3 6.500h10M3 9.500h6" /></Icon></PlainButton>
          <PlainButton $w={24} aria-label="Input language">中</PlainButton>
          <PlainButton $w={32} aria-label="Sogou input"><Icon w={15} h={15} c="none"><path fill="#f04a23" d="M1 2l12-2 2 13-12 2z" /><path stroke="#fff" strokeWidth="2" d="M11.500 4.500C8 2.500 4.500 4 5 5.500c.5 1.700 6 1 6 3.500 0 2-4 2.500-7 1" /></Icon></PlainButton>
          <Clock>11:17</Clock>
          <DesktopEdge />
        </Tray>
      </Taskbar>
    </Shell>
  );
}
